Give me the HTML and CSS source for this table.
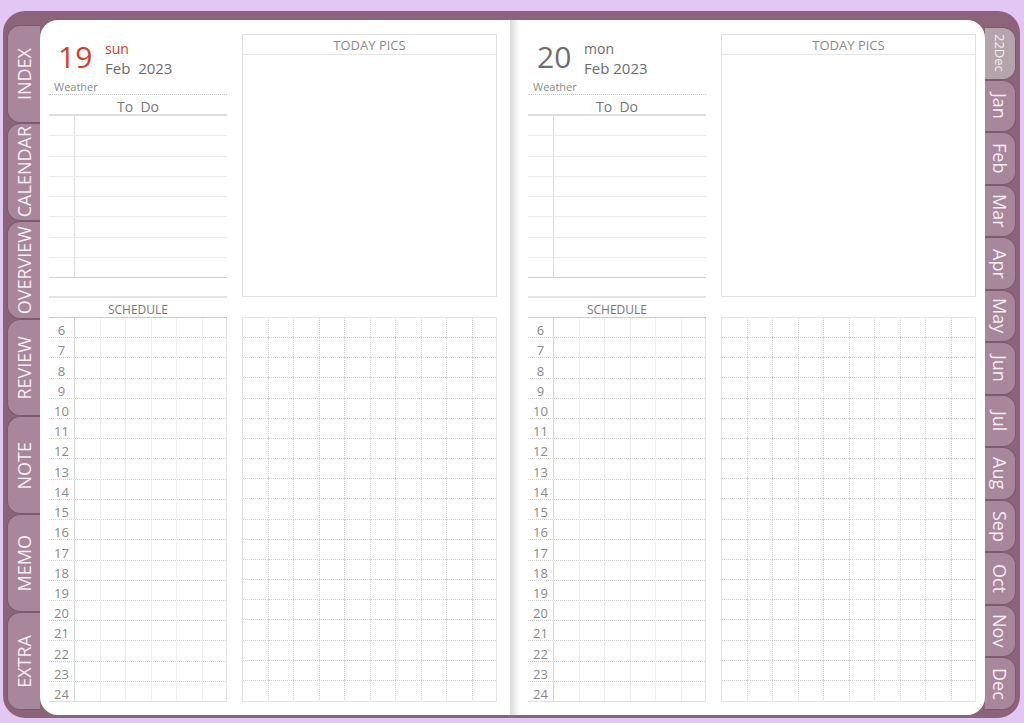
FILE: index.html
```html
<!DOCTYPE html>
<html lang="en">
<head>
    <meta charset="UTF-8">
    <meta name="viewport" content="width=device-width, initial-scale=1.0">
    <title>Daily Planner - Feb 2023</title>
    <link rel="stylesheet" href="styles.css">
</head>
<body>

<div class="cover">
    <nav class="side-tabs">
        <div class="side-tab"><span>INDEX</span></div>
        <div class="side-tab"><span>CALENDAR</span></div>
        <div class="side-tab"><span>OVERVIEW</span></div>
        <div class="side-tab"><span>REVIEW</span></div>
        <div class="side-tab"><span>NOTE</span></div>
        <div class="side-tab"><span>MEMO</span></div>
        <div class="side-tab"><span>EXTRA</span></div>
    </nav>

    <div class="paper">
        <!-- left page: sunday -->
        <section class="page page-left">
            <div class="col-main">
                <div class="date-head">
                    <div class="date-row">
                        <span class="day-num red">19</span>
                        <div class="day-meta">
                            <span class="weekday red">sun</span>
                            <span class="month">Feb&nbsp; 2023</span>
                        </div>
                    </div>
                    <div class="weather">Weather</div>
                </div>
                <div class="todo-title">To&nbsp; Do</div>
                <div class="todo-list">
                    <div class="todo-row"></div>
                    <div class="todo-row"></div>
                    <div class="todo-row"></div>
                    <div class="todo-row"></div>
                    <div class="todo-row"></div>
                    <div class="todo-row"></div>
                    <div class="todo-row"></div>
                    <div class="todo-row"></div>
                </div>
                <div class="schedule">
                    <div class="schedule-title">SCHEDULE</div>
                    <div class="hours">
                        <div class="hour-row"><span class="hour">6</span><div class="hour-cells"></div></div>
                        <div class="hour-row"><span class="hour">7</span><div class="hour-cells"></div></div>
                        <div class="hour-row"><span class="hour">8</span><div class="hour-cells"></div></div>
                        <div class="hour-row"><span class="hour">9</span><div class="hour-cells"></div></div>
                        <div class="hour-row"><span class="hour">10</span><div class="hour-cells"></div></div>
                        <div class="hour-row"><span class="hour">11</span><div class="hour-cells"></div></div>
                        <div class="hour-row"><span class="hour">12</span><div class="hour-cells"></div></div>
                        <div class="hour-row"><span class="hour">13</span><div class="hour-cells"></div></div>
                        <div class="hour-row"><span class="hour">14</span><div class="hour-cells"></div></div>
                        <div class="hour-row"><span class="hour">15</span><div class="hour-cells"></div></div>
                        <div class="hour-row"><span class="hour">16</span><div class="hour-cells"></div></div>
                        <div class="hour-row"><span class="hour">17</span><div class="hour-cells"></div></div>
                        <div class="hour-row"><span class="hour">18</span><div class="hour-cells"></div></div>
                        <div class="hour-row"><span class="hour">19</span><div class="hour-cells"></div></div>
                        <div class="hour-row"><span class="hour">20</span><div class="hour-cells"></div></div>
                        <div class="hour-row"><span class="hour">21</span><div class="hour-cells"></div></div>
                        <div class="hour-row"><span class="hour">22</span><div class="hour-cells"></div></div>
                        <div class="hour-row"><span class="hour">23</span><div class="hour-cells"></div></div>
                        <div class="hour-row"><span class="hour">24</span><div class="hour-cells"></div></div>
                    </div>
                </div>
            </div>
            <div class="col-side">
                <div class="pics">
                    <div class="pics-title">TODAY PICS</div>
                </div>
                <div class="grid">
                    <div class="grid-row"></div><div class="grid-row"></div><div class="grid-row"></div>
                    <div class="grid-row"></div><div class="grid-row"></div><div class="grid-row"></div>
                    <div class="grid-row"></div><div class="grid-row"></div><div class="grid-row"></div>
                    <div class="grid-row"></div><div class="grid-row"></div><div class="grid-row"></div>
                    <div class="grid-row"></div><div class="grid-row"></div><div class="grid-row"></div>
                    <div class="grid-row"></div><div class="grid-row"></div><div class="grid-row"></div>
                    <div class="grid-row"></div>
                </div>
            </div>
        </section>

        <div class="spine"></div>

        <!-- right page: monday -->
        <section class="page page-right">
            <div class="col-main">
                <div class="date-head">
                    <div class="date-row">
                        <span class="day-num">20</span>
                        <div class="day-meta">
                            <span class="weekday">mon</span>
                            <span class="month">Feb 2023</span>
                        </div>
                    </div>
                    <div class="weather">Weather</div>
                </div>
                <div class="todo-title">To&nbsp; Do</div>
                <div class="todo-list">
                    <div class="todo-row"></div>
                    <div class="todo-row"></div>
                    <div class="todo-row"></div>
                    <div class="todo-row"></div>
                    <div class="todo-row"></div>
                    <div class="todo-row"></div>
                    <div class="todo-row"></div>
                    <div class="todo-row"></div>
                </div>
                <div class="schedule">
                    <div class="schedule-title">SCHEDULE</div>
                    <div class="hours">
                        <div class="hour-row"><span class="hour">6</span><div class="hour-cells"></div></div>
                        <div class="hour-row"><span class="hour">7</span><div class="hour-cells"></div></div>
                        <div class="hour-row"><span class="hour">8</span><div class="hour-cells"></div></div>
                        <div class="hour-row"><span class="hour">9</span><div class="hour-cells"></div></div>
                        <div class="hour-row"><span class="hour">10</span><div class="hour-cells"></div></div>
                        <div class="hour-row"><span class="hour">11</span><div class="hour-cells"></div></div>
                        <div class="hour-row"><span class="hour">12</span><div class="hour-cells"></div></div>
                        <div class="hour-row"><span class="hour">13</span><div class="hour-cells"></div></div>
                        <div class="hour-row"><span class="hour">14</span><div class="hour-cells"></div></div>
                        <div class="hour-row"><span class="hour">15</span><div class="hour-cells"></div></div>
                        <div class="hour-row"><span class="hour">16</span><div class="hour-cells"></div></div>
                        <div class="hour-row"><span class="hour">17</span><div class="hour-cells"></div></div>
                        <div class="hour-row"><span class="hour">18</span><div class="hour-cells"></div></div>
                        <div class="hour-row"><span class="hour">19</span><div class="hour-cells"></div></div>
                        <div class="hour-row"><span class="hour">20</span><div class="hour-cells"></div></div>
                        <div class="hour-row"><span class="hour">21</span><div class="hour-cells"></div></div>
                        <div class="hour-row"><span class="hour">22</span><div class="hour-cells"></div></div>
                        <div class="hour-row"><span class="hour">23</span><div class="hour-cells"></div></div>
                        <div class="hour-row"><span class="hour">24</span><div class="hour-cells"></div></div>
                    </div>
                </div>
            </div>
            <div class="col-side">
                <div class="pics">
                    <div class="pics-title">TODAY PICS</div>
                </div>
                <div class="grid">
                    <div class="grid-row"></div><div class="grid-row"></div><div class="grid-row"></div>
                    <div class="grid-row"></div><div class="grid-row"></div><div class="grid-row"></div>
                    <div class="grid-row"></div><div class="grid-row"></div><div class="grid-row"></div>
                    <div class="grid-row"></div><div class="grid-row"></div><div class="grid-row"></div>
                    <div class="grid-row"></div><div class="grid-row"></div><div class="grid-row"></div>
                    <div class="grid-row"></div><div class="grid-row"></div><div class="grid-row"></div>
                    <div class="grid-row"></div>
                </div>
            </div>
        </section>
    </div>

    <nav class="month-tabs">
        <div class="month-tab prev-year">22Dec</div>
        <div class="month-tab">Jan</div>
        <div class="month-tab">Feb</div>
        <div class="month-tab">Mar</div>
        <div class="month-tab">Apr</div>
        <div class="month-tab">May</div>
        <div class="month-tab">Jun</div>
        <div class="month-tab">Jul</div>
        <div class="month-tab">Aug</div>
        <div class="month-tab">Sep</div>
        <div class="month-tab">Oct</div>
        <div class="month-tab">Nov</div>
        <div class="month-tab">Dec</div>
    </nav>
</div>

</body>
</html>
```

FILE: styles.css
```css
body {
    margin: 0;
    height: 723px;
    overflow: hidden;
    background-color: #e1c7f1;
    font-family: 'Open Sans', 'Noto Sans', sans-serif;
    color: #6c6c6c;
}

.cover {
    display: flex;
    height: 707px;
    margin: 11px 4px 5px 3px;
    background-color: #8b6479;
    border-radius: 22px;
}

/* section tabs on the left */
.side-tabs {
    width: 37px;
    flex: none;
    display: flex;
    flex-direction: column;
    padding: 14px 0 8px 4px;
    box-sizing: border-box;
}

.side-tab {
    flex: 1;
    display: flex;
    align-items: center;
    justify-content: center;
    background-color: #a8869b;
    border: 1px solid #7d5b6f;
    border-right: none;
    border-radius: 13px 0 0 13px;
    color: #f5edf2;
    font-size: 18px;
}

.side-tab span {
    writing-mode: vertical-rl;
    transform: rotate(180deg);
}

/* month tabs on the right */
.month-tabs {
    width: 35px;
    flex: none;
    display: flex;
    flex-direction: column;
    padding: 16px 4px 8px 0;
    box-sizing: border-box;
}

.month-tab {
    flex: 1;
    display: flex;
    align-items: center;
    justify-content: center;
    writing-mode: vertical-rl;
    background-color: #a8869b;
    border: 1px solid #7d5b6f;
    border-left: none;
    border-radius: 0 13px 13px 0;
    color: #f5edf2;
    font-size: 18px;
}

.month-tab.prev-year {
    background-color: #b4a5ac;
    font-size: 13px;
}

/* the paper */
.paper {
    width: 945px;
    flex: none;
    display: flex;
    margin: 9px 0 3px;
    background-color: #fff;
    border-radius: 18px;
    overflow: hidden;
}

.page {
    display: flex;
    gap: 15px;
    padding-top: 14px;
    box-sizing: border-box;
}

.page-left {
    width: 470px;
    padding-left: 9px;
}

.page-right {
    width: 465px;
    padding-left: 8px;
}

.spine {
    width: 10px;
    flex: none;
    background: linear-gradient(to right, #dcdcdc 0, #e2e2e2 25%, #efefef 55%, #f8f8f8 80%, #fff 100%);
}

.col-main {
    width: 178px;
    flex: none;
}

.col-side {
    width: 255px;
    flex: none;
}

/* date header */
.date-head {
    border-bottom: 1px dotted #cccccc;
}

.date-row {
    display: flex;
    height: 38px;
    padding: 6px 0 0 9px;
}

.day-num {
    width: 47px;
    margin-top: 2px;
    font-size: 30px;
    line-height: 30px;
    color: #6e6e6e;
}

.day-meta {
    display: flex;
    flex-direction: column;
}

.weekday {
    font-size: 14px;
    line-height: 18px;
}

.month {
    font-size: 15px;
    line-height: 20px;
}

.red {
    color: #d93c1f;
}

.weather {
    margin-top: 2px;
    padding-left: 5px;
    font-size: 11px;
    line-height: 14px;
    color: #8c8c8c;
}

/* to do */
.todo-title {
    height: 14px;
    padding-top: 5px;
    line-height: 14px;
    font-size: 14px;
    text-align: center;
    color: #777;
    border-bottom: 2px solid #dedede;
}

.todo-list {
    height: 162px;
    display: grid;
    grid-template-rows: repeat(8, 1fr);
    background: linear-gradient(#dedede, #dedede) 25px 0 / 1px 100% no-repeat;
}

.todo-row {
    border-bottom: 1px solid #ececec;
}

.todo-row:last-child {
    border-bottom-color: #d4d4d4;
}

/* schedule */
.schedule {
    margin-top: 18px;
    border-top: 2px solid #e4e4e4;
}

.schedule-title {
    height: 15px;
    padding-top: 4px;
    line-height: 15px;
    font-size: 12px;
    text-align: center;
    color: #777;
    border-bottom: 1px solid #cbcbcb;
}

.hours {
    height: 384px;
    display: grid;
    grid-template-rows: repeat(19, 1fr);
    border-right: 1px solid #e6e6e6;
}

.hour-row {
    display: flex;
    border-bottom: 1px dotted #d2d2d2;
}

.hour-row:last-child {
    border-bottom: 1px solid #e0e0e0;
}

.hour {
    width: 25px;
    flex: none;
    display: flex;
    align-items: flex-end;
    justify-content: center;
    border-right: 1px solid #d2d2d2;
    font-size: 13px;
    line-height: 14px;
    color: #8a8a8a;
}

.hour-cells {
    flex: 1;
    background: repeating-linear-gradient(to right, transparent 0 25px, #efefef 25px 26px, transparent 26px 50px, #efefef 50px 51px);
}

/* today pics + grid */
.pics {
    height: 261px;
    border: 1px solid #e2e2e2;
}

.pics-title {
    height: 19px;
    line-height: 20px;
    font-size: 13px;
    text-align: center;
    color: #8a8a8a;
    border-bottom: 1px solid #e6e6e6;
}

.grid {
    height: 383px;
    margin-top: 20px;
    display: grid;
    grid-template-rows: repeat(19, 1fr);
    border: 1px solid #e6e6e6;
}

.grid-row {
    border-bottom: 1px dotted #d2d2d2;
    background:
        repeating-linear-gradient(to bottom, transparent 0 1px, #fff 1px 2px),
        repeating-linear-gradient(to right, transparent 0 25px, #d8d8d8 25px 26px, transparent 26px 50px, #d8d8d8 50px 51px);
}

.grid-row:last-child {
    border-bottom: none;
}
```
